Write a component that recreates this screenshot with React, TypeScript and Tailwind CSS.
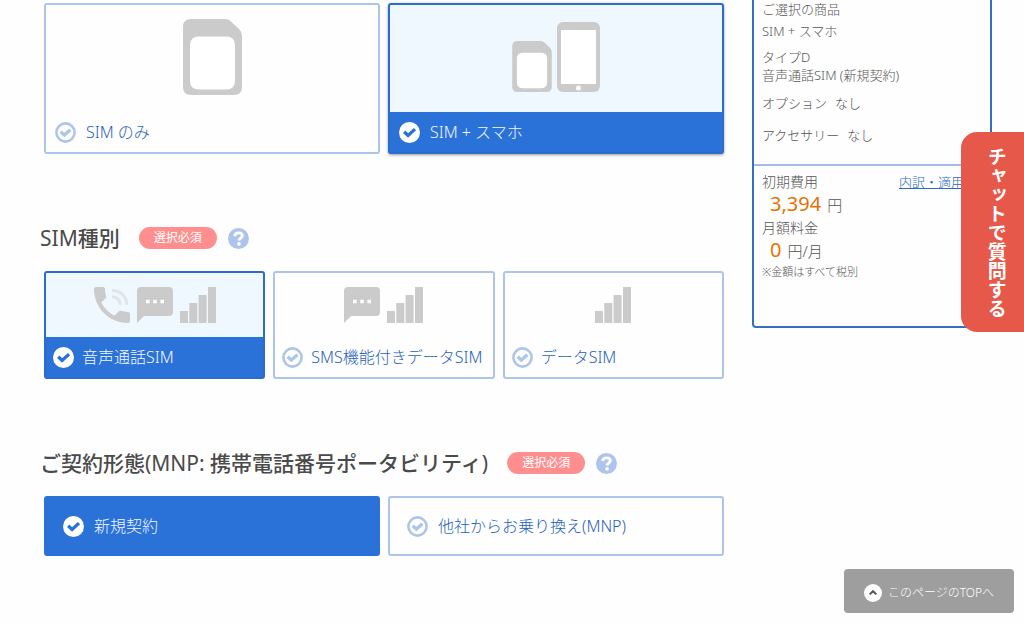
import { useState, type ReactNode } from "react";

function CheckMark({ selected }: { selected: boolean }) {
  return (
    <svg viewBox="0 0 21 21" className="size-[21px] shrink-0" aria-hidden="true">
      {selected ? (
        <circle cx="10.5" cy="10.5" r="10.5" fill="#fff" />
      ) : (
        <circle cx="10.5" cy="10.5" r="9.1" fill="none" stroke="#adc5e9" strokeWidth="2.6" />
      )}
      <path
        d={selected ? "M5.200 9.700l3.900 3.800 6.900-6.400" : "M5.700 9.700l3.700 3.400 6-5.400"}
        fill="none"
        stroke={selected ? "#2a71d8" : "#adc5e9"}
        strokeWidth="3.3"
      />
    </svg>
  );
}

function SimIcon({ className }: { className: string }) {
  return (
    <svg viewBox="0 0 59 76" className={className} aria-hidden="true">
      <path
        d="M8 0H42Q45.500 0 48 2.400L56.500 10.500Q59 13 59 16.500V68Q59 76 51 76H8Q0 76 0 68V8Q0 0 8 0Z"
        fill="#cbcbcb"
      />
      <rect x="7" y="17.500" width="45" height="53" rx="8" fill="#fff" />
    </svg>
  );
}

function SmartphoneIcon() {
  return (
    <svg viewBox="0 0 43 70" className="h-[70px] w-[43px]" aria-hidden="true">
      <rect width="43" height="70" rx="6" fill="#cbcbcb" />
      <rect x="4" y="8" width="35" height="54" fill="#fff" />
      <circle cx="21.500" cy="66" r="2.500" fill="#fff" />
    </svg>
  );
}

function CallIcon() {
  return (
    <svg viewBox="3 3 18 18" className="size-9" aria-hidden="true">
      <path
        d="M20 15.500c-1.250 0-2.450-.2-3.570-.57-.35-.11-.74-.03-1.020.24l-2.200 2.200c-2.830-1.440-5.150-3.750-6.590-6.580l2.200-2.210c.28-.27.36-.66.25-1.010C8.700 6.450 8.500 5.250 8.500 4c0-.55-.45-1-1-1H4c-.55 0-1 .45-1 1 0 9.390 7.610 17 17 17 .55 0 1-.45 1-1v-3.500c0-.55-.45-1-1-1z"
        fill="#cbcbcb"
      />
      <g fill="none" stroke="#dfe5ea" strokeWidth="1.500">
        <path d="M12 4.700c4.300 0 7.400 3.200 7.400 7.300" />
        <path d="M12 7.900c2.400 0 4.200 1.800 4.200 4.100" />
      </g>
    </svg>
  );
}

function MessageIcon() {
  return (
    <svg viewBox="0 0 36 36" className="size-9" aria-hidden="true">
      <path d="M4 0H32Q36 0 36 4V25Q36 29 32 29H7L0 36V4Q0 0 4 0Z" fill="#cbcbcb" />
      <path d="M9 12.700h3.600v3.600H9zM16.200 12.700h3.600v3.600h-3.600zM23.400 12.700H27v3.600h-3.600z" fill="#fff" />
    </svg>
  );
}

function SignalIcon() {
  return (
    <svg viewBox="0 0 36 36" className="size-9" aria-hidden="true">
      <path d="M0 24h8v12H0zM9.300 16h8v20h-8zM18.600 8h8v28h-8zM28 0h8v36h-8z" fill="#cbcbcb" />
    </svg>
  );
}

type CardProps = {
  name: string;
  label: string;
  selected: boolean;
  onSelect: () => void;
  size: "large" | "medium";
  raised?: boolean;
  children: ReactNode;
};

function PictureCard({ name, label, selected, onSelect, size, raised, children }: CardProps) {
  const large = size === "large";
  return (
    <label
      className={`relative flex cursor-pointer flex-col overflow-hidden rounded-[3px] border-2 ${
        selected ? "border-[#2b6dcc] bg-[#2a71d8]" : "border-[#adc5e9]"
      } ${selected && raised ? "shadow-[0_1px_3px_rgba(0,0,0,0.4)]" : ""}`}
    >
      <input type="radio" name={name} checked={selected} onChange={onSelect} className="sr-only" />
      <span
        className={`flex justify-center ${large ? "h-[107px]" : "h-16 gap-[7px] pt-3.5"} ${
          selected ? "bg-[#f0f8ff]" : ""
        }`}
      >
        {children}
      </span>
      <span
        className={`flex h-10 items-center whitespace-nowrap ${
          large ? "gap-2.5 pl-[9px]" : "gap-2 pl-[7px]"
        } ${selected ? "text-[#f2f8ff]" : "text-[#1f62bd]"}`}
      >
        <CheckMark selected={selected} />
        {label}
      </span>
    </label>
  );
}

function PlainCard({
  name,
  label,
  selected,
  onSelect,
}: {
  name: string;
  label: string;
  selected: boolean;
  onSelect: () => void;
}) {
  return (
    <label
      className={`relative flex h-[60px] cursor-pointer items-center gap-2.5 rounded-[3px] border-2 pl-[17px] ${
        selected
          ? "border-[#2a71d8] bg-[#2a71d8] text-[#f2f8ff]"
          : "border-[#adc5e9] text-[#1f62bd]"
      }`}
    >
      <input type="radio" name={name} checked={selected} onChange={onSelect} className="sr-only" />
      <CheckMark selected={selected} />
      {label}
    </label>
  );
}

function SectionHeading({ id, children }: { id: string; children: ReactNode }) {
  return (
    <div className="flex h-8 items-center">
      <h2 id={id} className="text-[21px] leading-8 font-normal whitespace-nowrap text-[#4a4a4a]">
        {children}
      </h2>
      <span className="ml-[19px] flex h-[22px] w-[78px] items-center justify-center rounded-full bg-[#ff8f8f] text-xs font-normal text-white">
        選択必須
      </span>
      <button type="button" aria-label="ヘルプ" className="ml-[11px] cursor-pointer">
        <svg viewBox="0 0 21 21" className="size-[21px]" aria-hidden="true">
          <circle cx="10.500" cy="10.500" r="10.500" fill="#adc5ec" />
          <path
            d="M6.700 8.100C6.900 5.900 8.400 4.900 10.500 4.900c2.200 0 3.800 1.100 3.800 2.900 0 2.300-3.300 2.300-3.300 4.700"
            fill="none"
            stroke="#fff"
            strokeWidth="2.900"
          />
          <circle cx="11" cy="15.900" r="1.800" fill="#fff" />
        </svg>
      </button>
    </div>
  );
}

export default function App() {
  const [product, setProduct] = useState("phone");
  const [simType, setSimType] = useState("voice");
  const [contract, setContract] = useState("new");

  return (
    <div className="flex min-h-screen items-start gap-7 bg-[#fefefe] pr-8 pl-10 font-['Noto_Sans','Noto_Sans_CJK_JP',sans-serif] text-base font-light">
      <main className="min-w-0 flex-1 pt-[3px]">
        <div role="radiogroup" aria-label="商品" className="ml-1 grid grid-cols-2 gap-2">
          <PictureCard
            name="product"
            label="SIM のみ"
            size="large"
            raised
            selected={product === "sim"}
            onSelect={() => setProduct("sim")}
          >
            <SimIcon className="mt-3.5 h-[76px] w-[59px]" />
          </PictureCard>
          <PictureCard
            name="product"
            label="SIM + スマホ"
            size="large"
            raised
            selected={product === "phone"}
            onSelect={() => setProduct("phone")}
          >
            <span className="flex items-end gap-[5px] self-end pb-5">
              <SimIcon className="h-[51px] w-10" />
              <SmartphoneIcon />
            </span>
          </PictureCard>
        </div>

        <section className="mt-[68px]">
          <SectionHeading id="sim-type">
            SIM<span className="font-medium">種別</span>
          </SectionHeading>
          <div
            role="radiogroup"
            aria-labelledby="sim-type"
            className="mt-[17px] ml-1 grid grid-cols-3 gap-2"
          >
            <PictureCard
              name="sim-type"
              label="音声通話SIM"
              size="medium"
              selected={simType === "voice"}
              onSelect={() => setSimType("voice")}
            >
              <CallIcon />
              <MessageIcon />
              <SignalIcon />
            </PictureCard>
            <PictureCard
              name="sim-type"
              label="SMS機能付きデータSIM"
              size="medium"
              selected={simType === "sms"}
              onSelect={() => setSimType("sms")}
            >
              <MessageIcon />
              <SignalIcon />
            </PictureCard>
            <PictureCard
              name="sim-type"
              label="データSIM"
              size="medium"
              selected={simType === "data"}
              onSelect={() => setSimType("data")}
            >
              <SignalIcon />
            </PictureCard>
          </div>
        </section>

        <section className="mt-[68px]">
          <SectionHeading id="contract">
            <span className="font-medium">ご契約形態</span>(MNP:{" "}
            <span className="font-medium">携帯電話番号ポータビリティ</span>)
          </SectionHeading>
          <div
            role="radiogroup"
            aria-labelledby="contract"
            className="mt-[17px] ml-1 grid grid-cols-2 gap-2"
          >
            <PlainCard
              name="contract"
              label="新規契約"
              selected={contract === "new"}
              onSelect={() => setContract("new")}
            />
            <PlainCard
              name="contract"
              label="他社からお乗り換え(MNP)"
              selected={contract === "mnp"}
              onSelect={() => setContract("mnp")}
            />
          </div>
        </section>
      </main>

      <aside className="w-60 shrink-0 rounded-b border-2 border-t-0 border-[#356fc4] whitespace-nowrap text-[#555]">
        <div className="border-b-2 border-[#a3bce2] pb-5 pl-2 text-[13px] leading-[18px]">
          <p>ご選択の商品</p>
          <p className="mt-1">SIM + スマホ</p>
          <p className="mt-2">タイプD</p>
          <p>音声通話SIM (新規契約)</p>
          <p className="mt-2.5 flex gap-2">
            <span>オプション</span>
            <span>なし</span>
          </p>
          <p className="mt-3.5 flex gap-2">
            <span>アクセサリー</span>
            <span>なし</span>
          </p>
        </div>
        <div className="pt-[5px] pb-[43px] pl-2 text-sm leading-[22px]">
          <div className="flex justify-between">
            <span>初期費用</span>
            <a href="#breakdown" className="text-[13px] text-[#2a6cc4] underline">
              内訳・適用特典
            </a>
          </div>
          <p className="flex h-[22px] items-baseline gap-1.5 pl-2 text-[15px]">
            <span className="text-xl leading-[22px] font-normal text-[#e57300]">3,394</span>
            <span>円</span>
          </p>
          <p className="mt-0.5">月額料金</p>
          <p className="flex h-[22px] items-baseline gap-1.5 pl-2 text-[15px]">
            <span className="text-xl leading-[22px] font-normal text-[#e57300]">0</span>
            <span>円/月</span>
          </p>
          <p className="text-[11px]">※金額はすべて税別</p>
        </div>
      </aside>

      <button
        type="button"
        className="fixed top-[132px] right-0 flex h-[200px] w-[63px] cursor-pointer items-center justify-center rounded-l-2xl bg-[#e65849] pl-1.5 text-[19px] font-bold text-white [writing-mode:vertical-rl]"
      >
        チャットで質問する
      </button>

      <a
        href="#top"
        className="fixed right-2.5 bottom-2.5 flex h-11 w-[170px] items-center justify-center gap-1.5 rounded bg-[#9e9e9e] pt-[3px] text-xs text-white"
      >
        <svg viewBox="0 0 18 18" className="size-[18px]" aria-hidden="true">
          <circle cx="9" cy="9" r="9" fill="#fff" />
          <path d="M5.700 10.400L9 7.200l3.300 3.200" fill="none" stroke="#555" strokeWidth="2" />
        </svg>
        このページのTOPへ
      </a>
    </div>
  );
}
